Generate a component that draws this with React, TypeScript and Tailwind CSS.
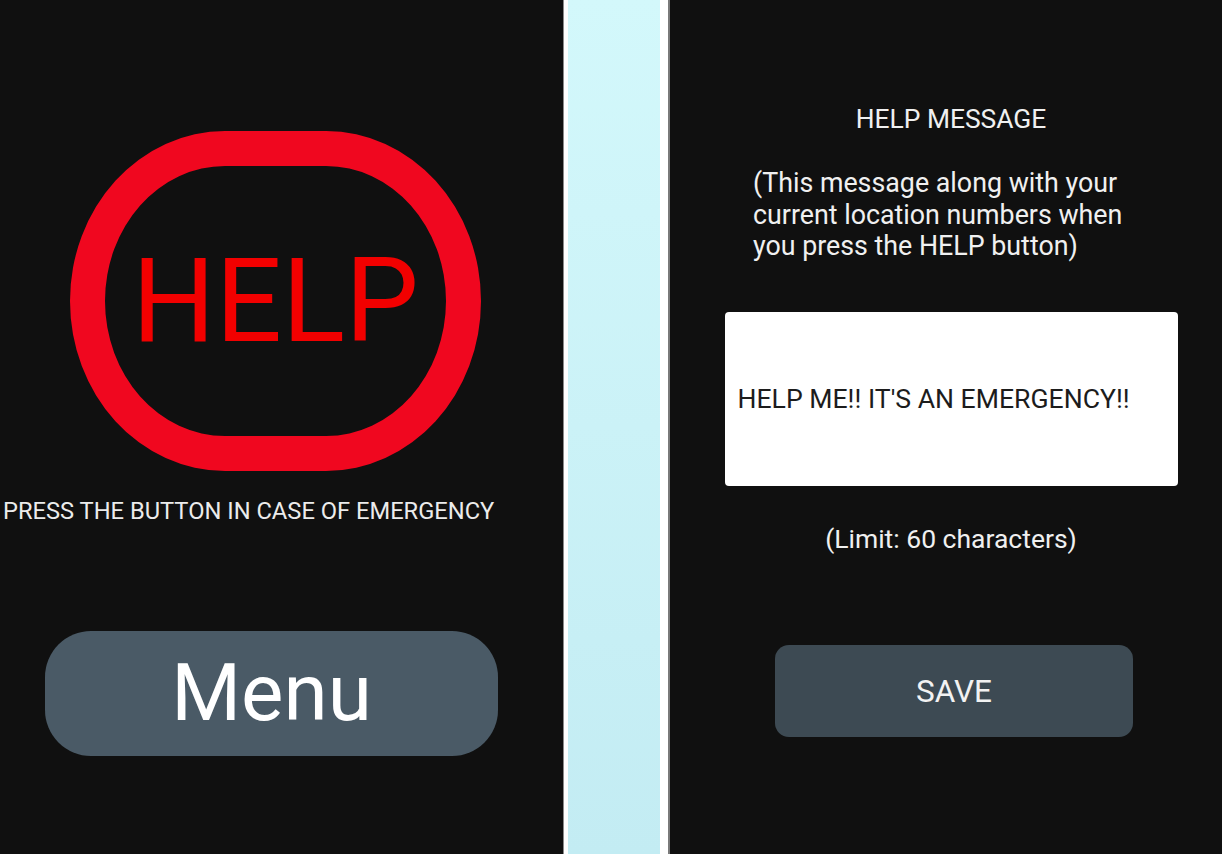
import React from "react";

export default function App() {
  return (
    <div className="flex w-[1222px] h-[854px] overflow-hidden bg-[#101010] font-['Roboto',sans-serif]">
      {/* Left screen */}
      <div className="w-[563px] shrink-0 bg-[#101010] flex flex-col">
        <div className="ml-[70px] mt-[131px] w-[411px] h-[340px] border-[35px] border-[#f0071f] rounded-[155px/170px] flex items-center justify-center">
          <span className="text-[117px] leading-none text-[#f20000]">HELP</span>
        </div>
        <div className="mt-[29px] pl-[3px] text-[23.7px] leading-none text-[#ececec] whitespace-nowrap">
          PRESS THE BUTTON IN CASE OF EMERGENCY
        </div>
        <div className="ml-[45px] mt-[107px] w-[453px] h-[125px] rounded-[46px] bg-[#4a5a66] flex items-center justify-center">
          <span className="text-[80px] leading-none text-white">Menu</span>
        </div>
      </div>

      {/* Middle strip */}
      <div className="w-[107px] shrink-0 flex">
        <div className="w-[1px] bg-[#8a8a8a]" />
        <div className="w-[4px] bg-white" />
        <div className="flex-1 bg-gradient-to-b from-[#d3f8fb] to-[#c3ecf3]" />
        <div className="w-[8px] bg-white" />
        <div className="w-[2px] bg-[#7a7a7a]" />
      </div>

      {/* Right screen */}
      <div className="flex-1 bg-[#101010] flex flex-col items-center pl-[10px]">
        <div className="mt-[106px] text-[26.4px] leading-none text-[#f0f0f0] whitespace-nowrap">HELP MESSAGE</div>
        <div className="self-start ml-[73px] mt-[36px] text-[26.8px] leading-[31.5px] text-[#f0f0f0] whitespace-nowrap">
          (This message along with your
          <br />
          current location numbers when
          <br />
          you press the HELP button)
        </div>
        <div className="mt-[49px] w-[453px] h-[174px] bg-white rounded-[4px] flex items-center pl-[13px]">
          <span className="text-[26.6px] leading-none text-[#1c1c1c] whitespace-nowrap">
            HELP ME!! IT'S AN EMERGENCY!!
          </span>
        </div>
        <div className="mt-[40px] text-[26.5px] leading-none text-[#f0f0f0] whitespace-nowrap">
          (Limit: 60 characters)
        </div>
        <div className="ml-[6px] mt-[93px] w-[358px] h-[92px] rounded-[14px] bg-[#3d4a53] flex items-center justify-center">
          <span className="text-[31.5px] leading-none text-[#f2f2f2]">SAVE</span>
        </div>
      </div>
    </div>
  );
}
